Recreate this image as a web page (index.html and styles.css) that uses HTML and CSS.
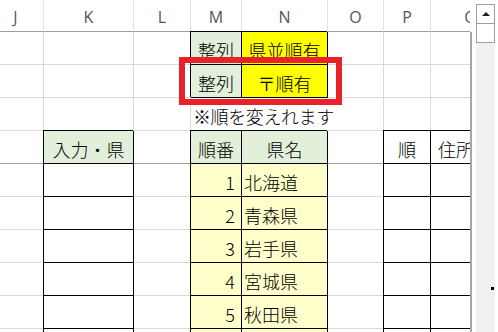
FILE: index.html
```html
<!doctype html>
<html>
<head>
<meta charset="utf-8">
<link rel="stylesheet" href="styles.css">
</head>
<body>
<div class="app">
	<div class="sheet">
		<div class="h hj">J</div>
		<div class="h">K</div>
		<div class="h">L</div>
		<div class="h">M</div>
		<div class="h">N</div>
		<div class="h">O</div>
		<div class="h">P</div>
		<div class="h">Q</div>

		<div class="c"></div>
		<div class="c"></div>
		<div class="c"></div>
		<div class="c bx green ctr">整列</div>
		<div class="c bx yel ctr">県並順有</div>
		<div class="c"></div>
		<div class="c"></div>
		<div class="c"></div>

		<div class="c"></div>
		<div class="c"></div>
		<div class="c"></div>
		<div class="c bx green ctr">整列</div>
		<div class="c bx yel ctr">〒順有</div>
		<div class="c"></div>
		<div class="c"></div>
		<div class="c"></div>

		<div class="c"></div>
		<div class="c"></div>
		<div class="c"></div>
		<div class="c spill note">※順を変えれます</div>
		<div class="c spill"></div>
		<div class="c"></div>
		<div class="c"></div>
		<div class="c"></div>

		<div class="c fz"></div>
		<div class="c bx green ctr">入力・県</div>
		<div class="c fz"></div>
		<div class="c bx green ctr">順番</div>
		<div class="c bx green ctr">県名</div>
		<div class="c fz"></div>
		<div class="c bx ctr">順</div>
		<div class="c bx lt2">住所</div>

		<div class="c"></div><div class="c bx"></div><div class="c"></div>
		<div class="c bx ly rt">1</div><div class="c bx ly lt">北海道</div>
		<div class="c"></div><div class="c bx"></div><div class="c bx"></div>

		<div class="c"></div><div class="c bx"></div><div class="c"></div>
		<div class="c bx ly rt">2</div><div class="c bx ly lt">青森県</div>
		<div class="c"></div><div class="c bx"></div><div class="c bx"></div>

		<div class="c"></div><div class="c bx"></div><div class="c"></div>
		<div class="c bx ly rt">3</div><div class="c bx ly lt">岩手県</div>
		<div class="c"></div><div class="c bx"></div><div class="c bx"></div>

		<div class="c"></div><div class="c bx"></div><div class="c"></div>
		<div class="c bx ly rt">4</div><div class="c bx ly lt">宮城県</div>
		<div class="c"></div><div class="c bx"></div><div class="c bx"></div>

		<div class="c"></div><div class="c bx"></div><div class="c"></div>
		<div class="c bx ly rt">5</div><div class="c bx ly lt">秋田県</div>
		<div class="c"></div><div class="c bx"></div><div class="c bx"></div>

		<div class="c"></div><div class="c bx"></div><div class="c"></div>
		<div class="c bx ly"></div><div class="c bx ly"></div>
		<div class="c"></div><div class="c bx"></div><div class="c bx"></div>
	</div>
	<div class="edge"></div>
	<div class="vscroll">
		<div class="sb-btn"><span class="sb-arrow"></span></div>
		<div class="sb-thumb"></div>
		<div class="sb-track"><span class="sb-dot"></span></div>
	</div>
	<div class="mark"></div>
</div>
</body>
</html>
```
FILE: styles.css
```css
html, body {
	margin: 0;
	height: 332px;
	overflow: hidden;
	background: #fff;
}
.app {
	position: relative;
	display: flex;
	height: 332px;
	font-family: "Noto Sans CJK JP", sans-serif;
}
.sheet {
	width: 470px;
	flex: none;
	overflow: hidden;
	display: grid;
	grid-template-columns: 44px 90px 57px 51px 86px 56px 47px 80px;
	grid-template-rows: 32px repeat(10, 33px);
	align-content: start;
}
.h {
	box-sizing: border-box;
	border-right: 1px solid #e3e3e3;
	border-bottom: 1px solid #9e9e9e;
	display: flex;
	align-items: center;
	justify-content: center;
	padding-top: 2px;
	font-family: "Open Sans", sans-serif;
	font-size: 16px;
	color: #555;
}
.hj {
	padding-right: 12px;
}
.c {
	box-sizing: border-box;
	border-right: 1px solid #d9d9d9;
	border-bottom: 1px solid #d9d9d9;
	display: flex;
	align-items: center;
	padding-top: 3px;
	font-size: 18px;
	font-weight: 300;
	line-height: 1;
	color: #000;
	white-space: nowrap;
}
.bx {
	border-right-color: #000;
	border-bottom-color: #000;
	box-shadow: -1px -1px 0 #000;
}
.fz {
	border-bottom-color: #a0a0a0;
}
.spill {
	border-right-color: transparent;
}
.note {
	padding-left: 2px;
	letter-spacing: -0.4px;
}
.green { background: #e2efda; }
.yel { background: #ffff00; }
.ly { background: #ffffcc; }
.ctr { justify-content: center; }
.rt { justify-content: flex-end; padding-right: 6px; }
.lt { padding-left: 2px; }
.lt2 { padding-left: 7px; }

.edge {
	width: 2px;
	flex: none;
	margin-top: 32px;
	background: #a6a6a6;
}
.vscroll {
	width: 19px;
	flex: none;
	margin-left: 4px;
	padding-top: 4px;
	display: flex;
	flex-direction: column;
}
.sb-btn {
	box-sizing: border-box;
	height: 20px;
	border: 1px solid #a0a0a0;
	background: #fff;
	display: flex;
	align-items: center;
	justify-content: center;
}
.sb-arrow {
	width: 0;
	height: 0;
	border-left: 4px solid transparent;
	border-right: 4px solid transparent;
	border-bottom: 4px solid #222;
}
.sb-thumb {
	box-sizing: border-box;
	height: 20px;
	margin-top: -1px;
	border: 1px solid #a0a0a0;
	background: #fff;
}
.sb-track {
	flex: 1;
	background: #f1f1f1;
	padding-top: 244px;
}
.sb-dot {
	display: block;
	width: 3px;
	height: 3px;
	margin-left: 15px;
	background: #000;
}
.mark {
	position: absolute;
	left: 179px;
	top: 57px;
	width: 163px;
	height: 48px;
	box-sizing: border-box;
	border: 6px solid #e8212b;
}
```
